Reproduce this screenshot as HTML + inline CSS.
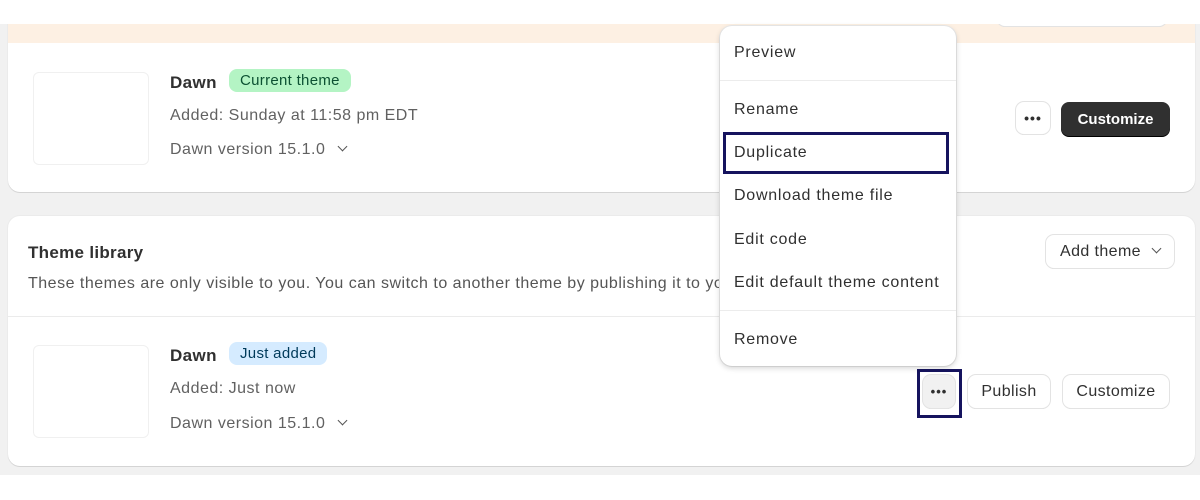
<!DOCTYPE html>
<html><head><meta charset="utf-8"><style>
*{box-sizing:border-box;margin:0;padding:0}
body{width:1200px;height:500px;background:#fff;position:relative;overflow:hidden;font-family:"Liberation Sans",sans-serif;color:#303030}
.abs{position:absolute}
.gray{left:0;top:24px;width:1200px;height:451px;background:#f1f1f1}
.card{background:#fff;border-radius:12px;box-shadow:0 1px 0 #d4d4d4,0 0 0 1px #ebebeb}
.thumb{border:1px solid #f0f0f0;border-radius:6px;background:#fff}
.t{font-size:16px;white-space:nowrap;letter-spacing:0.5px}
.name{font-size:17px;font-weight:bold;color:#303030;letter-spacing:0.4px}
.muted{color:#616161}
.badge{font-size:15px;padding:3px 11px;border-radius:8px;letter-spacing:0.3px}
.btn{background:#fff;border-radius:8px;box-shadow:0 0 0 1px #e3e3e3,0 1px 0 #cfcfcf;font-size:15px;font-weight:bold;color:#303030;display:flex;align-items:center;justify-content:center;letter-spacing:0.4px}
.menu{background:#fff;border-radius:12px;box-shadow:0 2px 6px rgba(0,0,0,.18),0 0 0 1px #ececec}
.mi{position:absolute;left:14px;font-size:16px;color:#303030;letter-spacing:0.75px;white-space:nowrap}
.sep{position:absolute;left:0;width:236px;height:1px;background:#ececec}
.chev{display:inline-block;width:7px;height:7px;border-right:1.6px solid #555;border-bottom:1.6px solid #555;transform:rotate(45deg);margin-left:14px;position:relative;top:-4px}
</style></head><body>
<div class="abs gray"></div>
<!-- card 1 -->
<div class="abs card" style="left:8px;top:10px;width:1187px;height:182px;overflow:hidden">
  <div class="abs" style="left:0;top:0;width:1187px;height:33px;background:#fdf0e3"></div>
  <div class="abs btn" style="left:989px;top:-20px;width:170px;height:36px"></div>
</div>
<div class="abs" style="left:0;top:0;width:1200px;height:24px;background:#fff"></div>
<div class="abs thumb" style="left:33px;top:72px;width:116px;height:93px"></div>
<div class="abs name" style="left:170px;top:73px">Dawn</div>
<div class="abs badge" style="left:229px;top:69px;background:#b4f4c4;color:#0c5132">Current theme</div>
<div class="abs t muted" style="left:170px;top:107px">Added: Sunday at 11:58 pm EDT</div>
<div class="abs t muted" style="left:170px;top:141px">Dawn version 15.1.0<span class="chev"></span></div>
<div class="abs btn" style="left:1016px;top:102px;width:34px;height:32px;font-size:14px;letter-spacing:1px">•••</div>
<div class="abs" style="left:1061px;top:102px;width:109px;height:34px;background:#303030;border-radius:8px;color:#fff;font-weight:bold;font-size:15px;display:flex;align-items:center;justify-content:center;box-shadow:0 1px 0 #000">Customize</div>
<!-- card 2 -->
<div class="abs card" style="left:8px;top:216px;width:1187px;height:250px"></div>
<div class="abs" style="left:8px;top:316px;width:1187px;height:1px;background:#ebebeb"></div>
<div class="abs" style="left:28px;top:243px;font-size:17px;font-weight:bold;color:#303030;letter-spacing:0.3px">Theme library</div>
<div class="abs t muted" style="left:28px;top:275px;color:#555">These themes are only visible to you. You can switch to another theme by publishing it to your store.</div>
<div class="abs btn" style="left:1046px;top:235px;width:128px;height:33px;font-weight:normal;color:#303030;font-size:16px">Add theme<span class="chev" style="margin-left:12px;top:-3px"></span></div>
<div class="abs thumb" style="left:33px;top:345px;width:116px;height:93px"></div>
<div class="abs name" style="left:170px;top:346px">Dawn</div>
<div class="abs badge" style="left:229px;top:342px;background:#d5ebff;color:#003a5a">Just added</div>
<div class="abs t muted" style="left:170px;top:380px">Added: Just now</div>
<div class="abs t muted" style="left:170px;top:415px">Dawn version 15.1.0<span class="chev"></span></div>
<div class="abs btn" style="left:923px;top:375px;width:32px;height:33px;background:#f1f1f1;font-size:13px;letter-spacing:1px">•••</div>
<div class="abs" style="left:917px;top:369px;width:45px;height:49px;border:3px solid #15135e"></div>
<div class="abs btn" style="left:968px;top:375px;width:82px;height:33px;font-weight:normal;font-size:16px">Publish</div>
<div class="abs btn" style="left:1063px;top:375px;width:106px;height:33px;font-weight:normal;font-size:16px">Customize</div>
<!-- menu -->
<div class="abs menu" style="left:720px;top:26px;width:236px;height:340px">
  <div class="mi" style="top:18px">Preview</div>
  <div class="sep" style="top:54px"></div>
  <div class="mi" style="top:75px">Rename</div>
  <div class="abs" style="left:3px;top:106px;width:226px;height:42px;border:3px solid #15135e"></div>
  <div class="mi" style="top:118px">Duplicate</div>
  <div class="mi" style="top:161px">Download theme file</div>
  <div class="mi" style="top:205px">Edit code</div>
  <div class="mi" style="top:248px">Edit default theme content</div>
  <div class="sep" style="top:284px"></div>
  <div class="mi" style="top:305px">Remove</div>
</div>
</body></html>
